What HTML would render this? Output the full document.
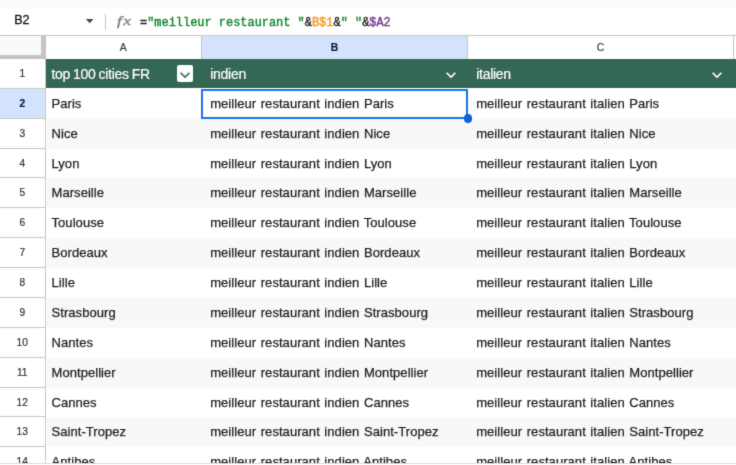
<!DOCTYPE html>
<html lang="fr"><head><meta charset="utf-8"><title>Sheet</title>
<style>
*{margin:0;padding:0;box-sizing:border-box}
html,body{width:736px;height:465px;overflow:hidden;background:#fff}
body{position:relative;font-family:"Liberation Sans",sans-serif;color:#1f1f1f;font-size:13.0px}
.abs{position:absolute}
#root{position:absolute;left:0;top:0;width:736px;height:465px;overflow:hidden;background:#fff;filter:url(#soft)}
.topstrip{left:0;top:0;width:736px;height:7.5px;background:#f9fbfd}
.fbar{left:0;top:7.5px;width:736px;height:28px;background:#fff}
.fline{left:0;top:35px;width:736px;height:1px;background:#c7c7c7}
.namebox{left:14.2px;top:10.6px;height:19px;line-height:19px;font-size:12.6px;color:#111;-webkit-text-stroke:0.3px #111}
.divider{left:105px;top:13.5px;width:1px;height:16px;background:#c7c7c7}
.fx{left:117px;top:10px;height:22px;line-height:22px;font-family:"Liberation Serif",serif;font-style:italic;font-size:12.4px;color:#7d8287;letter-spacing:1px;-webkit-text-stroke:0.35px;transform:scaleX(1.4);transform-origin:0 50%}
.formula{left:140px;top:14px;-webkit-text-stroke:0.4px;height:19px;line-height:19px;font-family:"Liberation Mono",monospace;font-size:11.95px;white-space:pre;color:#1f1f1f}
.formula .g{color:#138a30} .formula .o{color:#f7981d} .formula .p{color:#7e3794}
.corner{left:0;top:36px;width:41px;height:18.5px;background:#f8f9fa}
.cornerV{left:41px;top:36px;width:4.5px;height:23px;background:#c4c4c4}
.cornerH{left:0;top:54.5px;width:45.5px;height:4.5px;background:#c4c4c4}
.colhdr{top:36px;height:22.7px;line-height:24.6px;text-align:center;font-size:10.4px;color:#303336;-webkit-text-stroke:0.15px;overflow:hidden;background:#fff;border-right:1px solid #c7c7c7}
.colhdr.sel{background:#d3e3fd;color:#041e49;font-weight:bold}
.rowhdr{left:0;width:45.5px;text-align:center;font-size:10.2px;color:#303336;-webkit-text-stroke:0.2px;overflow:hidden;background:#fff;border-right:1px solid #c7c7c7;border-bottom:1px solid #c7c7c7}
.rowhdr.sel{background:#d3e3fd;color:#041e49;font-weight:bold}
.band{left:46.7px;width:690px;background:#f6f8f9}
.green{left:45.5px;width:691px;background:#356854}
.cell{white-space:nowrap;color:#1f1f1f;word-spacing:0.85px;letter-spacing:0.06px;-webkit-text-stroke:0.25px #1f1f1f}
.hcell{white-space:nowrap;color:#fff;font-size:14px;word-spacing:-0.5px;letter-spacing:-0.3px;-webkit-text-stroke:0.2px #fff}
</style></head>
<body>
<svg width="0" height="0" style="position:absolute"><defs><filter id="soft" x="0" y="0" width="100%" height="100%" color-interpolation-filters="sRGB"><feConvolveMatrix order="3" kernelMatrix="0.02 0.085 0.02 0.085 0.58 0.085 0.02 0.085 0.02" edgeMode="duplicate" preserveAlpha="true"/></filter></defs></svg>
<div id="root">
<div class="abs topstrip"></div>
<div class="abs fbar"></div>
<div class="abs namebox">B2</div>
<svg class="abs" style="left:84px;top:16px" width="12" height="10" viewBox="0 0 12 10"><path d="M1.9 2.9 L9.5 2.9 L5.7 7.3 Z" fill="#444746"/></svg>
<div class="abs divider"></div>
<div class="abs fx">fx</div>
<div class="abs formula">=<span class="g">"meilleur restaurant "</span>&amp;<span class="o">B$1</span>&amp;<span class="g">" "</span>&amp;<span class="p">$A2</span></div>
<div class="abs fline"></div>
<div class="abs corner"></div><div class="abs cornerV"></div><div class="abs cornerH"></div>
<div class="abs colhdr" style="left:45.5px;width:156.50px">A</div>
<div class="abs colhdr sel" style="left:202.0px;width:266.00px">B</div>
<div class="abs colhdr" style="left:468.0px;width:266.00px">C</div>
<div class="abs colhdr" style="left:734.0px;width:6.00px"></div>
<div class="abs rowhdr" style="top:59.00px;height:29.87px;line-height:30.67px">1</div>
<div class="abs green" style="top:59.30px;height:28.87px"></div>
<div class="abs hcell" style="left:51.40px;top:60.00px;height:29.87px;line-height:29.87px">top 100 cities FR</div>
<div class="abs hcell" style="left:210.30px;top:60.00px;height:29.87px;line-height:29.87px">indien</div>
<div class="abs hcell" style="left:476.30px;top:60.00px;height:29.87px;line-height:29.87px">italien</div>
<div class="abs rowhdr sel" style="top:88.87px;height:29.87px;line-height:30.67px">2</div>
<div class="abs cell" style="left:51.50px;top:88.87px;height:29.87px;line-height:29.87px">Paris</div>
<div class="abs cell" style="left:210.20px;top:88.87px;height:29.87px;line-height:29.87px">meilleur restaurant indien Paris</div>
<div class="abs cell" style="left:476.20px;top:88.87px;height:29.87px;line-height:29.87px">meilleur restaurant italien Paris</div>
<div class="abs rowhdr" style="top:118.74px;height:29.87px;line-height:30.67px">3</div>
<div class="abs band" style="top:118.74px;height:29.87px"></div>
<div class="abs cell" style="left:51.50px;top:118.74px;height:29.87px;line-height:29.87px">Nice</div>
<div class="abs cell" style="left:210.20px;top:118.74px;height:29.87px;line-height:29.87px">meilleur restaurant indien Nice</div>
<div class="abs cell" style="left:476.20px;top:118.74px;height:29.87px;line-height:29.87px">meilleur restaurant italien Nice</div>
<div class="abs rowhdr" style="top:148.61px;height:29.87px;line-height:30.67px">4</div>
<div class="abs cell" style="left:51.50px;top:148.61px;height:29.87px;line-height:29.87px">Lyon</div>
<div class="abs cell" style="left:210.20px;top:148.61px;height:29.87px;line-height:29.87px">meilleur restaurant indien Lyon</div>
<div class="abs cell" style="left:476.20px;top:148.61px;height:29.87px;line-height:29.87px">meilleur restaurant italien Lyon</div>
<div class="abs rowhdr" style="top:178.48px;height:29.87px;line-height:30.67px">5</div>
<div class="abs band" style="top:178.48px;height:29.87px"></div>
<div class="abs cell" style="left:51.50px;top:178.48px;height:29.87px;line-height:29.87px">Marseille</div>
<div class="abs cell" style="left:210.20px;top:178.48px;height:29.87px;line-height:29.87px">meilleur restaurant indien Marseille</div>
<div class="abs cell" style="left:476.20px;top:178.48px;height:29.87px;line-height:29.87px">meilleur restaurant italien Marseille</div>
<div class="abs rowhdr" style="top:208.35px;height:29.87px;line-height:30.67px">6</div>
<div class="abs cell" style="left:51.50px;top:208.35px;height:29.87px;line-height:29.87px">Toulouse</div>
<div class="abs cell" style="left:210.20px;top:208.35px;height:29.87px;line-height:29.87px">meilleur restaurant indien Toulouse</div>
<div class="abs cell" style="left:476.20px;top:208.35px;height:29.87px;line-height:29.87px">meilleur restaurant italien Toulouse</div>
<div class="abs rowhdr" style="top:238.22px;height:29.87px;line-height:30.67px">7</div>
<div class="abs band" style="top:238.22px;height:29.87px"></div>
<div class="abs cell" style="left:51.50px;top:238.22px;height:29.87px;line-height:29.87px">Bordeaux</div>
<div class="abs cell" style="left:210.20px;top:238.22px;height:29.87px;line-height:29.87px">meilleur restaurant indien Bordeaux</div>
<div class="abs cell" style="left:476.20px;top:238.22px;height:29.87px;line-height:29.87px">meilleur restaurant italien Bordeaux</div>
<div class="abs rowhdr" style="top:268.09px;height:29.87px;line-height:30.67px">8</div>
<div class="abs cell" style="left:51.50px;top:268.09px;height:29.87px;line-height:29.87px">Lille</div>
<div class="abs cell" style="left:210.20px;top:268.09px;height:29.87px;line-height:29.87px">meilleur restaurant indien Lille</div>
<div class="abs cell" style="left:476.20px;top:268.09px;height:29.87px;line-height:29.87px">meilleur restaurant italien Lille</div>
<div class="abs rowhdr" style="top:297.96px;height:29.87px;line-height:30.67px">9</div>
<div class="abs band" style="top:297.96px;height:29.87px"></div>
<div class="abs cell" style="left:51.50px;top:297.96px;height:29.87px;line-height:29.87px">Strasbourg</div>
<div class="abs cell" style="left:210.20px;top:297.96px;height:29.87px;line-height:29.87px">meilleur restaurant indien Strasbourg</div>
<div class="abs cell" style="left:476.20px;top:297.96px;height:29.87px;line-height:29.87px">meilleur restaurant italien Strasbourg</div>
<div class="abs rowhdr" style="top:327.83px;height:29.87px;line-height:30.67px">10</div>
<div class="abs cell" style="left:51.50px;top:327.83px;height:29.87px;line-height:29.87px">Nantes</div>
<div class="abs cell" style="left:210.20px;top:327.83px;height:29.87px;line-height:29.87px">meilleur restaurant indien Nantes</div>
<div class="abs cell" style="left:476.20px;top:327.83px;height:29.87px;line-height:29.87px">meilleur restaurant italien Nantes</div>
<div class="abs rowhdr" style="top:357.70px;height:29.87px;line-height:30.67px">11</div>
<div class="abs band" style="top:357.70px;height:29.87px"></div>
<div class="abs cell" style="left:51.50px;top:357.70px;height:29.87px;line-height:29.87px">Montpellier</div>
<div class="abs cell" style="left:210.20px;top:357.70px;height:29.87px;line-height:29.87px">meilleur restaurant indien Montpellier</div>
<div class="abs cell" style="left:476.20px;top:357.70px;height:29.87px;line-height:29.87px">meilleur restaurant italien Montpellier</div>
<div class="abs rowhdr" style="top:387.57px;height:29.87px;line-height:30.67px">12</div>
<div class="abs cell" style="left:51.50px;top:387.57px;height:29.87px;line-height:29.87px">Cannes</div>
<div class="abs cell" style="left:210.20px;top:387.57px;height:29.87px;line-height:29.87px">meilleur restaurant indien Cannes</div>
<div class="abs cell" style="left:476.20px;top:387.57px;height:29.87px;line-height:29.87px">meilleur restaurant italien Cannes</div>
<div class="abs rowhdr" style="top:417.44px;height:29.87px;line-height:30.67px">13</div>
<div class="abs band" style="top:417.44px;height:29.87px"></div>
<div class="abs cell" style="left:51.50px;top:417.44px;height:29.87px;line-height:29.87px">Saint-Tropez</div>
<div class="abs cell" style="left:210.20px;top:417.44px;height:29.87px;line-height:29.87px">meilleur restaurant indien Saint-Tropez</div>
<div class="abs cell" style="left:476.20px;top:417.44px;height:29.87px;line-height:29.87px">meilleur restaurant italien Saint-Tropez</div>
<div class="abs rowhdr" style="top:447.31px;height:29.87px;line-height:30.67px">14</div>
<div class="abs cell" style="left:51.50px;top:447.31px;height:29.87px;line-height:29.87px">Antibes</div>
<div class="abs cell" style="left:210.20px;top:447.31px;height:29.87px;line-height:29.87px">meilleur restaurant indien Antibes</div>
<div class="abs cell" style="left:476.20px;top:447.31px;height:29.87px;line-height:29.87px">meilleur restaurant italien Antibes</div>
<div class="abs" style="left:177px;top:65.44px;width:16.2px;height:16.2px;background:#fff;border-radius:2px"></div>
<svg class="abs" style="left:175.00px;top:64.75px" width="20" height="20" viewBox="0 0 24 24"><path d="M16.59 8.59 12 13.17 7.41 8.59 6 10l6 6 6-6z" fill="#356854"/></svg>
<svg class="abs" style="left:441.00px;top:64.55px" width="20" height="20" viewBox="0 0 24 24"><path d="M16.59 8.59 12 13.17 7.41 8.59 6 10l6 6 6-6z" fill="#fff"/></svg>
<svg class="abs" style="left:707.00px;top:64.55px" width="20" height="20" viewBox="0 0 24 24"><path d="M16.59 8.59 12 13.17 7.41 8.59 6 10l6 6 6-6z" fill="#fff"/></svg>
<div class="abs" style="left:201.30px;top:88.57px;width:266.30px;height:30.47px;border:2px solid #1a73e8"></div>
<div class="abs" style="left:463.50px;top:114.20px;width:8.6px;height:8.6px;border-radius:50%;background:#1262dc"></div>
<div class="abs" style="left:0;top:462.6px;width:736px;height:3px;background:#fff;border-top:0.8px solid #dcdcdc"></div>
</div>
</body></html>
